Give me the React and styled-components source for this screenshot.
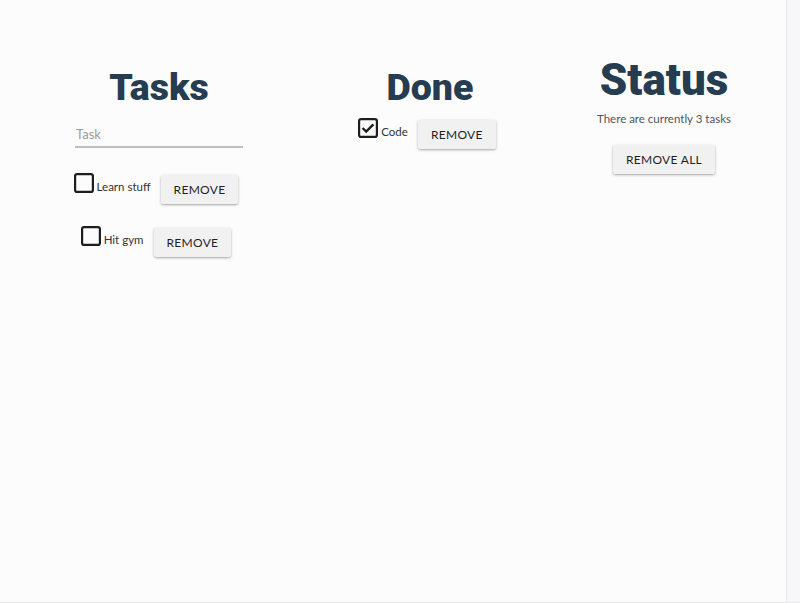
import React from 'react';
import styled, { createGlobalStyle } from 'styled-components';

const GlobalStyle = createGlobalStyle`
    html, body {
        margin: 0;
        padding: 0;
        height: 603px;
        overflow: hidden;
        background: #fdfcfd;
        font-family: 'Lato', 'Noto Sans', sans-serif;
    }
`;

const Page = styled.div`
    display: flex;
    width: 800px;
    height: 602px;
    border-bottom: 1px solid #e6e6e6;
`;

const Board = styled.div`
    flex: 1;
    display: grid;
    grid-template-columns: 318px 224px 244px;
    align-items: start;
    padding-top: 59px;
`;

const SideStrip = styled.div`
    width: 13px;
    background: #f7f7f9;
    border-left: 1px solid #e8e8ea;
`;

const Column = styled.section`
    display: flex;
    flex-direction: column;
    align-items: center;
`;

const Heading = styled.h1`
    margin: ${p => (p.big ? '-1px 0 0' : '10px 0 0')};
    font-family: 'Roboto', sans-serif;
    font-weight: 900;
    font-size: ${p => (p.big ? '44px' : '37.5px')};
    line-height: 1;
    color: #263c50;
`;

const TaskInput = styled.input`
    width: 168px;
    margin: 10.5px 0 0;
    padding: 8px 1px 4px;
    box-sizing: border-box;
    height: 31px;
    border: none;
    border-bottom: 2px solid #bdbdbd;
    background: transparent;
    font-family: inherit;
    font-size: 13px;
    color: #333;
    outline: none;

    &::placeholder {
        color: #9a9a9a;
    }
`;

const TaskList = styled.div`
    display: flex;
    flex-direction: column;
    align-items: center;
    gap: 22px;
    margin-top: ${p => p.offset || 0}px;
`;

const TaskRow = styled.div`
    display: flex;
    align-items: flex-start;
    margin-right: 6px;
`;

const Label = styled.label`
    display: flex;
    align-items: flex-start;
`;

const Box = styled.svg`
    width: 20px;
    height: 20px;
    flex: none;
`;

const LabelText = styled.span`
    margin: 7px 10px 0 3px;
    font-size: 11.5px;
    line-height: 14px;
    color: #333;
`;

const Button = styled.button`
    margin-top: ${p => p.shift || 0}px;
    height: 29px;
    padding: 0 13px;
    border: none;
    border-radius: 2px;
    background: #f2f1f2;
    box-shadow: 0 1px 3px rgba(0, 0, 0, 0.28), 0 1px 1px rgba(0, 0, 0, 0.08);
    font-family: 'Lato', sans-serif;
    font-size: 12px;
    letter-spacing: 0.3px;
    color: #1f1f1f;
    text-transform: uppercase;
    cursor: pointer;
`;

const StatusText = styled.p`
    margin: 9px 0 18px;
    font-size: 11.5px;
    line-height: 16px;
    color: #4a5563;
`;

const CheckBox = ({ checked }) => (
    <Box viewBox="0 0 20 20">
        <rect x="1.1" y="1.1" width="17.8" height="17.8" rx="2" fill="none" stroke="#1e1e1e" strokeWidth="2.2" />
        {checked && (
            <polyline points="4.6,10 8.2,13.6 15.4,6.4" fill="none" stroke="#1e1e1e" strokeWidth="2.4" />
        )}
    </Box>
);

const tasks = [
    { id: 1, name: 'Learn stuff', done: false },
    { id: 2, name: 'Hit gym', done: false },
    { id: 3, name: 'Code', done: true },
];

const Task = ({ task }) => (
    <TaskRow>
        <Label>
            <CheckBox checked={task.done} />
            <LabelText>{task.name}</LabelText>
        </Label>
        <Button shift={2}>Remove</Button>
    </TaskRow>
);

export default function App() {
    const todo = tasks.filter(t => !t.done);
    const done = tasks.filter(t => t.done);

    return (
        <>
            <GlobalStyle />
            <Page>
                <Board>
                    <Column>
                        <Heading>Tasks</Heading>
                        <TaskInput placeholder="Task" />
                        <TaskList offset={25}>
                            {todo.map(t => <Task key={t.id} task={t} />)}
                        </TaskList>
                    </Column>
                    <Column>
                        <Heading>Done</Heading>
                        <TaskList offset={11}>
                            {done.map(t => <Task key={t.id} task={t} />)}
                        </TaskList>
                    </Column>
                    <Column>
                        <Heading big>Status</Heading>
                        <StatusText>There are currently {tasks.length} tasks</StatusText>
                        <Button>Remove all</Button>
                    </Column>
                </Board>
                <SideStrip />
            </Page>
        </>
    );
}
